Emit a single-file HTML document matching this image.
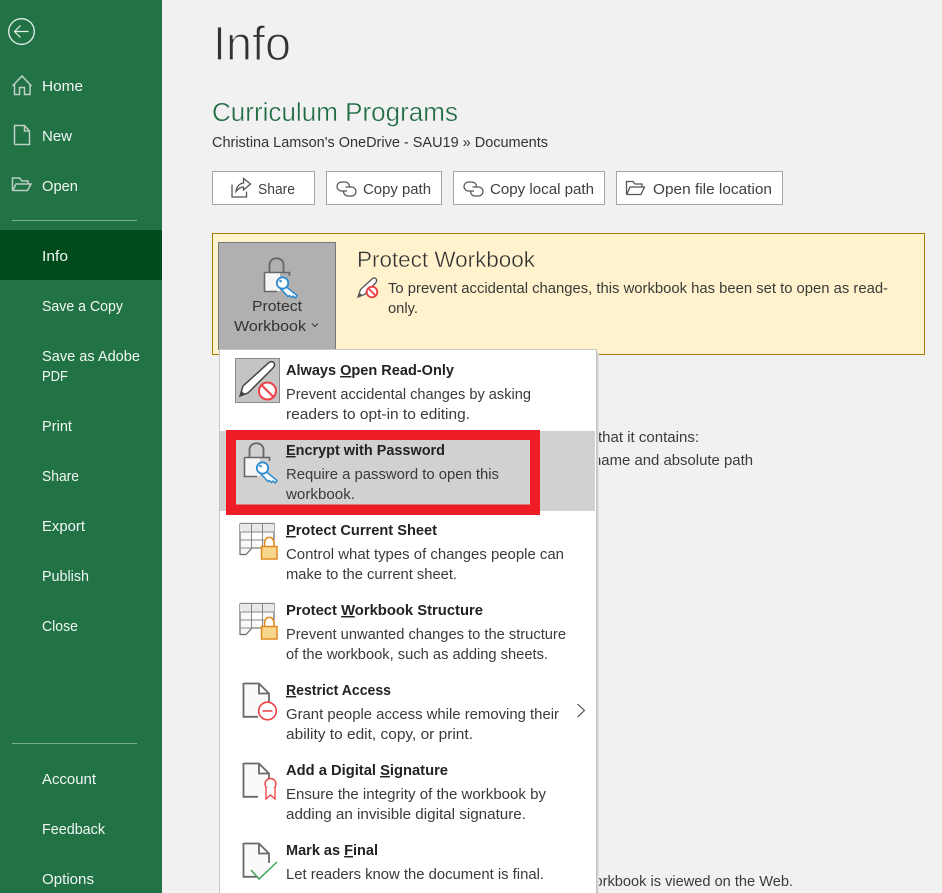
<!DOCTYPE html>
<html lang="en">
<head>
<meta charset="utf-8">
<title>Info</title>
<style>
html,body{margin:0;padding:0;background:#f1f1f1;width:942px;height:893px;overflow:hidden}
svg{display:block}
text{font-family:"Liberation Sans",sans-serif;font-size:14.5px;white-space:pre}
.s text{fill:#f2f7f4}
.d{fill:#3a3a3a}
.t{fill:#222;font-weight:bold;font-size:14.5px}
.b{fill:#3f3f3f}
</style>
</head>
<body>
<svg width="942" height="893" viewBox="0 0 942 893" xmlns="http://www.w3.org/2000/svg">
<defs>
<g id="key" fill="none">
<path d="M266.500 472 L277 480.500 L275.500 483 L273 481 L271.500 482.500 L269.500 480.500 L268 481.500 L261 474" fill="#fff" stroke="#2e8bd0" stroke-width="1.500"/>
<circle cx="262.500" cy="468" r="5.700" fill="#fff" stroke="#2e8bd0" stroke-width="1.800"/>
<circle cx="260.500" cy="466" r="1.300" fill="#2e8bd0"/>
</g>
<g id="lock">
<path d="M249.500 457 V450 C249.500 441 263.500 441 263.500 450 V457" fill="none" stroke="#666" stroke-width="1.800"/>
<rect x="245" y="458" width="15" height="18" fill="#f6f6f6"/>
<path d="M244.500 457.500 H269.500 V461 M244.500 457.500 V476.500 H257" fill="none" stroke="#666" stroke-width="1.600"/>
<use href="#key"/>
</g>
<g id="sheet">
<path d="M240 523.500 H274 V540 M240 523.500 V554.500 H246 L252 548 H261" fill="#f8f8f8" stroke="#6a6a6a" stroke-width="1.200"/>
<path d="M240 532 H274 M240 540 H264 M240 548 H261 M251.500 523.500 V548 M262.500 523.500 V547" fill="none" stroke="#8a8a8a" stroke-width="1"/>
<rect x="240" y="524" width="34" height="8" fill="#e8e8e8"/>
<path d="M240.500 523.500 H274 M251.500 524 V532 M262.500 524 V532 M240 532 H274" fill="none" stroke="#8a8a8a"/>
<path d="M264.500 547 V543 C264.500 535.500 274 535.500 274 543 V547" fill="#fff" stroke="#e08a1e" stroke-width="1.600"/>
<rect x="261.500" y="546.500" width="15.500" height="12.500" fill="#f7d68c" stroke="#e08a1e" stroke-width="1.500"/>
</g>
<g id="doc">
<path d="M244 683.500 H259 V693.500 H268.500 V712 L258 716.500 H244 Z" fill="#fafafa"/>
<path d="M243.500 683.500 H259 L269 693.500 V703 M259 683.500 V693.500 H269 M243.500 683 V716.800 H258" fill="none" stroke="#6a6a6a" stroke-width="1.800"/>
</g>
</defs>

<rect width="942" height="893" fill="#f1f1f1"/>

<!-- sidebar -->
<rect width="162" height="893" fill="#217346"/>
<rect y="230" width="162" height="50" fill="#004b1c"/>
<rect x="12" y="220" width="125" height="1" fill="#7bab91"/>
<rect x="12" y="743" width="125" height="1" fill="#7bab91"/>

<g fill="none" stroke="#e8f0ec">
<circle cx="21.500" cy="31.500" r="12.800" stroke-width="1.300"/>
<path d="M28.500 31.500 H14.500 M20.500 25.500 L14.500 31.500 L20.500 37.500" stroke-width="1.200"/>
</g>
<g fill="none" stroke="#bcd0c5" stroke-width="1.500">
<path d="M12.500 86 L22 76 L31.500 86 M14.500 84.500 V94.500 H19.500 V87.500 H24.500 V94.500 H30 V84.500"/>
<path d="M14.500 144.500 V125.500 H24.500 L29.500 131 V144.500 H14.500 M24.500 125.500 V131 H29.500"/>
<path d="M12.500 190.500 V178 H19.500 L22 181 H28 V184 M12.500 190.500 H27.500 L31 184 H16 L13 190"/>
</g>

<g class="s">
<text x="42" y="91" textLength="41" lengthAdjust="spacingAndGlyphs">Home</text>
<text x="42" y="141" textLength="30" lengthAdjust="spacingAndGlyphs">New</text>
<text x="42" y="191" textLength="36" lengthAdjust="spacingAndGlyphs">Open</text>
<text x="42" y="261" textLength="26" lengthAdjust="spacingAndGlyphs">Info</text>
<text x="42" y="311" textLength="81" lengthAdjust="spacingAndGlyphs">Save a Copy</text>
<text x="42" y="361" textLength="98" lengthAdjust="spacingAndGlyphs">Save as Adobe</text>
<text x="42" y="381" textLength="26" lengthAdjust="spacingAndGlyphs">PDF</text>
<text x="42" y="431" textLength="30" lengthAdjust="spacingAndGlyphs">Print</text>
<text x="42" y="481" textLength="37" lengthAdjust="spacingAndGlyphs">Share</text>
<text x="42" y="531" textLength="43" lengthAdjust="spacingAndGlyphs">Export</text>
<text x="42" y="581" textLength="47" lengthAdjust="spacingAndGlyphs">Publish</text>
<text x="42" y="631" textLength="36" lengthAdjust="spacingAndGlyphs">Close</text>
<text x="42" y="784" textLength="54" lengthAdjust="spacingAndGlyphs">Account</text>
<text x="42" y="834" textLength="63" lengthAdjust="spacingAndGlyphs">Feedback</text>
<text x="42" y="884" textLength="52" lengthAdjust="spacingAndGlyphs">Options</text>
</g>

<!-- heading -->
<text x="213" y="60" textLength="78" lengthAdjust="spacingAndGlyphs" style="font-size:48px" fill="#333" stroke="#f1f1f1" stroke-width="1.200">Info</text>
<text x="212" y="121" textLength="246" lengthAdjust="spacingAndGlyphs" style="font-size:25.500px" fill="#1f6b43" stroke="#f1f1f1" stroke-width=".4">Curriculum Programs</text>
<text x="212" y="147" textLength="336" lengthAdjust="spacingAndGlyphs" fill="#333">Christina Lamson's OneDrive - SAU19 » Documents</text>

<!-- buttons -->
<g fill="#fff" stroke="#a6a6a6">
<rect x="212.500" y="171.500" width="102" height="33"/>
<rect x="326.500" y="171.500" width="115" height="33"/>
<rect x="453.500" y="171.500" width="151" height="33"/>
<rect x="616.500" y="171.500" width="166" height="33"/>
</g>
<text class="b" x="258" y="194" textLength="37" lengthAdjust="spacingAndGlyphs">Share</text>
<text class="b" x="363" y="194" textLength="68" lengthAdjust="spacingAndGlyphs">Copy path</text>
<text class="b" x="490" y="194" textLength="104" lengthAdjust="spacingAndGlyphs">Copy local path</text>
<text class="b" x="653" y="194" textLength="119" lengthAdjust="spacingAndGlyphs">Open file location</text>

<g fill="none" stroke="#555" stroke-width="1.300">
<path d="M232 184.500 V197 H246.500 V191.500 M236 191.500 C236.500 186.500 239.500 183.500 243.500 183 V178.500 L250.500 184 L243.500 190 V187 C240.500 187 238 189 236 191.500 Z"/>
<g id="lk"><path d="M347 191 H341.500 A4.500 4.500 0 0 1 341.500 182 H345 A4.500 4.500 0 0 1 349.500 186.500"/><path d="M345.500 187 H351.500 A4.500 4.500 0 0 1 351.500 196 H348 A4.500 4.500 0 0 1 343.500 191.500"/></g>
<use href="#lk" x="127"/>
<path d="M626.500 194.500 V181.500 H633 L635 184 H642 V187 M626.500 194.500 H641 L644.500 187 H630 L627 194"/>
</g>

<!-- banner -->
<rect x="212.500" y="233.500" width="712" height="121" fill="#fff2cc" stroke="#a67c00"/>
<text x="357" y="267" textLength="178" lengthAdjust="spacingAndGlyphs" style="font-size:22.500px" fill="#333" stroke="#fff2cc" stroke-width=".4">Protect Workbook</text>
<text class="d" x="388" y="293" textLength="500" lengthAdjust="spacingAndGlyphs">To prevent accidental changes, this workbook has been set to open as read-</text>
<text class="d" x="388" y="313" textLength="30" lengthAdjust="spacingAndGlyphs">only.</text>
<g fill="none">
<path d="M358 297 L360.500 289.500 L372.500 278.500 Q375.500 277 376.500 279.500 Q377 281.500 375.500 283 L364.500 294.500 Z" fill="#fff" stroke="#555" stroke-width="1.300"/>
<path d="M358 297 L359.500 292.500 L362.500 295.500 Z" fill="#555"/>
<circle cx="372" cy="292" r="5.300" fill="#fff" stroke="#ee4045" stroke-width="1.900"/>
<path d="M368.500 288.500 L375.500 295.500" stroke="#ee4045" stroke-width="1.900"/>
</g>

<rect x="218.500" y="242.500" width="117" height="107" fill="#b0b0b0" stroke="#777"/>
<use href="#lock" x="20" y="-185"/>
<text x="252" y="311" textLength="50" lengthAdjust="spacingAndGlyphs" fill="#333">Protect</text>
<text x="234" y="331" textLength="72" lengthAdjust="spacingAndGlyphs" fill="#333">Workbook</text>
<path d="M312 323.500 L315 326.500 L318 323.500" fill="none" stroke="#333" stroke-width="1"/>

<!-- right text behind menu -->
<text class="d" x="598" y="442" textLength="101" lengthAdjust="spacingAndGlyphs">that it contains:</text>
<text class="d" x="593" y="465" textLength="160" lengthAdjust="spacingAndGlyphs">name and absolute path</text>
<text class="d" x="584" y="886" textLength="209" lengthAdjust="spacingAndGlyphs">workbook is viewed on the Web.</text>

<!-- menu -->
<rect x="597" y="352" width="1" height="541" fill="#cfcfcf"/>
<rect x="598" y="353" width="1" height="540" fill="#e2e2e2"/>
<rect x="219.500" y="349.500" width="377" height="545" fill="#fff" stroke="#c6c6c6"/>
<rect x="220" y="431" width="375" height="80" fill="#d2d1cf"/>
<path d="M226 430 H540 V515 H226 Z M236 440 V504.500 H530 V440 Z" fill="#ee1c25" fill-rule="evenodd"/>

<!-- menu icons -->
<rect x="235.500" y="358.500" width="44" height="44" fill="#c4c4c4" stroke="#8a8a8a"/>
<path d="M240 396 L243 386 L269 362.500 Q272 360.500 274 363 Q275.500 365.500 273 368 L248 393 Z" fill="#fff" stroke="#444" stroke-width="1.500"/>
<path d="M240 396 L241.500 391 L245 394 Z" fill="#444"/>
<circle cx="267.500" cy="391" r="8.500" fill="#fff" stroke="#ee4045" stroke-width="2"/>
<path d="M261.500 385 L273.500 397" stroke="#ee4045" stroke-width="2"/>

<use href="#lock"/>
<use href="#sheet"/>
<use href="#sheet" y="80"/>

<use href="#doc"/>
<circle cx="267.500" cy="711" r="8.800" fill="#fff" stroke="#ee4045" stroke-width="1.600"/>
<path d="M262.500 711 H272.500" stroke="#ee4045" stroke-width="1.500"/>

<use href="#doc" y="80"/>
<circle cx="270.500" cy="784" r="5.500" fill="#fff" stroke="#ee4045" stroke-width="1.400"/>
<path d="M266 788 V799 L270.500 795 L275 799 V788" fill="#fff" stroke="#ee4045" stroke-width="1.300"/>

<use href="#doc" y="160"/>
<path d="M251 870 L259 879 L277 862" fill="none" stroke="#3fa35b" stroke-width="1.500"/>

<!-- menu text -->
<text class="t" x="286" y="375" textLength="168" lengthAdjust="spacingAndGlyphs">Always <tspan text-decoration="underline">O</tspan>pen Read-Only</text>
<text class="d" x="286" y="399" textLength="245" lengthAdjust="spacingAndGlyphs">Prevent accidental changes by asking</text>
<text class="d" x="286" y="419" textLength="184" lengthAdjust="spacingAndGlyphs">readers to opt-in to editing.</text>

<text class="t" x="286" y="455" textLength="159" lengthAdjust="spacingAndGlyphs"><tspan text-decoration="underline">E</tspan>ncrypt with Password</text>
<text class="d" x="286" y="479" textLength="213" lengthAdjust="spacingAndGlyphs">Require a password to open this</text>
<text class="d" x="286" y="499" textLength="69" lengthAdjust="spacingAndGlyphs">workbook.</text>

<text class="t" x="286" y="535" textLength="151" lengthAdjust="spacingAndGlyphs"><tspan text-decoration="underline">P</tspan>rotect Current Sheet</text>
<text class="d" x="286" y="559" textLength="278" lengthAdjust="spacingAndGlyphs">Control what types of changes people can</text>
<text class="d" x="286" y="579" textLength="171" lengthAdjust="spacingAndGlyphs">make to the current sheet.</text>

<text class="t" x="286" y="615" textLength="197" lengthAdjust="spacingAndGlyphs">Protect <tspan text-decoration="underline">W</tspan>orkbook Structure</text>
<text class="d" x="286" y="639" textLength="280" lengthAdjust="spacingAndGlyphs">Prevent unwanted changes to the structure</text>
<text class="d" x="286" y="659" textLength="262" lengthAdjust="spacingAndGlyphs">of the workbook, such as adding sheets.</text>

<text class="t" x="286" y="695" textLength="105" lengthAdjust="spacingAndGlyphs"><tspan text-decoration="underline">R</tspan>estrict Access</text>
<text class="d" x="286" y="719" textLength="273" lengthAdjust="spacingAndGlyphs">Grant people access while removing their</text>
<text class="d" x="286" y="739" textLength="187" lengthAdjust="spacingAndGlyphs">ability to edit, copy, or print.</text>
<path d="M577.500 704 L584.500 710.500 L577.500 717" fill="none" stroke="#444" stroke-width="1.100"/>

<text class="t" x="286" y="775" textLength="162" lengthAdjust="spacingAndGlyphs">Add a Digital <tspan text-decoration="underline">S</tspan>ignature</text>
<text class="d" x="286" y="799" textLength="260" lengthAdjust="spacingAndGlyphs">Ensure the integrity of the workbook by</text>
<text class="d" x="286" y="819" textLength="240" lengthAdjust="spacingAndGlyphs">adding an invisible digital signature.</text>

<text class="t" x="286" y="855" textLength="92" lengthAdjust="spacingAndGlyphs">Mark as <tspan text-decoration="underline">F</tspan>inal</text>
<text class="d" x="286" y="879" textLength="258" lengthAdjust="spacingAndGlyphs">Let readers know the document is final.</text>
</svg>
</body>
</html>
